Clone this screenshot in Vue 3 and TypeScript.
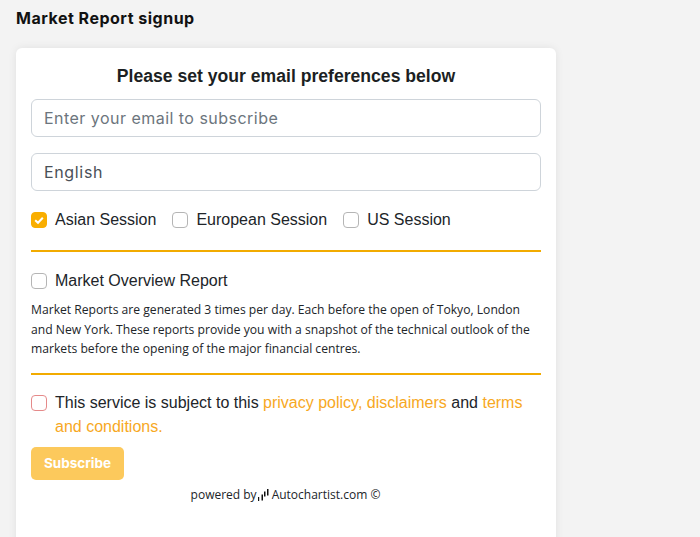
<script setup lang="ts">
import { ref } from 'vue'

const language = ref('English')
const sessions = ref([
  { label: 'Asian Session', checked: true },
  { label: 'European Session', checked: false },
  { label: 'US Session', checked: false },
])
const overview = ref(false)
const terms = ref(false)
</script>

<template>
  <div class="page">
    <h1 class="page-title">Market Report signup</h1>
    <section class="card">
      <h2 class="card-title">Please set your email preferences below</h2>
      <div class="field"><span class="placeholder">Enter your email to subscribe</span></div>
      <div class="field field-lang"><span class="value">{{ language }}</span></div>

      <div class="sessions">
        <label v-for="s in sessions" :key="s.label" class="check">
          <span class="box" :class="{ on: s.checked }">
            <svg v-if="s.checked" viewBox="0 0 16 16" width="16" height="16">
              <path d="M4.2 8.3 7 10.8 11.8 5.8" fill="none" stroke="#fff" stroke-width="2" />
            </svg>
          </span>
          <span>{{ s.label }}</span>
        </label>
      </div>

      <hr class="rule rule-a" />

      <label class="check overview">
        <span class="box" :class="{ on: overview }"></span>
        <span>Market Overview Report</span>
      </label>
      <p class="desc">
        Market Reports are generated 3 times per day. Each before the open of Tokyo, London and New York. These reports provide you with a snapshot of the technical outlook of the markets before the opening of the major financial centres.
      </p>

      <hr class="rule rule-b" />

      <div class="terms">
        <span class="box invalid" :class="{ on: terms }"></span>
        <p>This service is subject to this <a>privacy policy,</a> <a>disclaimers</a> and <a>terms and conditions.</a></p>
      </div>

      <button class="subscribe" type="button">Subscribe</button>

      <div class="powered">
        <span>powered by</span>
        <svg class="logo" viewBox="0 0 11 12" width="11" height="12">
          <rect x="0" y="8" width="1.2" height="4" fill="#111" />
          <rect x="3.5" y="5.5" width="1.5" height="6" fill="#111" />
          <rect x="6" y="2.5" width="1.5" height="5" fill="#111" />
          <rect x="9" y="0" width="1.5" height="6.5" fill="#111" />
        </svg>
        <span>Autochartist.com ©</span>
      </div>
    </section>
  </div>
</template>

<style>
html, body {
  margin: 0;
  height: 100%;
  overflow: hidden;
  background: #f3f3f3;
}
</style>

<style scoped>
.page {
  height: 537px;
  padding: 0 16px;
  box-sizing: border-box;
  overflow: hidden;
  font-family: "Liberation Sans", Arial, sans-serif;
  color: #212529;
}
.page-title {
  margin: 0;
  padding-top: 9px;
  height: 48px;
  box-sizing: border-box;
  font-family: "Inter", sans-serif;
  font-size: 16px;
  line-height: 19px;
  font-weight: 700;
  letter-spacing: 0.5px;
  color: #111;
}
.card {
  width: 540px;
  height: 520px;
  box-sizing: border-box;
  padding: 15px;
  background: #fff;
  border-radius: 6px;
  box-shadow: 0 0 8px rgba(0, 0, 0, 0.08);
}
.card-title {
  margin: 1px 0 11px;
  text-align: center;
  font-size: 17.6px;
  line-height: 24px;
  font-weight: 700;
  color: #1c1f23;
  height: 24px;
}
.field {
  height: 38px;
  box-sizing: border-box;
  border: 1px solid #ced4da;
  border-radius: 6px;
  padding: 0 12px;
  display: flex;
  align-items: center;
  font-family: "Inter", sans-serif;
  font-size: 16px;
  letter-spacing: 0.47px;
  background: #fff;
}
.field-lang { margin-top: 16px; }
.placeholder { color: #6c757d; }
.value { color: #495057; letter-spacing: 0.65px; }
.sessions {
  display: flex;
  gap: 16px;
  margin-top: 19px;
}
.check {
  display: flex;
  align-items: center;
  gap: 8px;
  font-size: 16px;
  line-height: 20px;
  color: #212529;
}
.box {
  width: 16px;
  height: 16px;
  box-sizing: border-box;
  border: 1px solid #b5b5b5;
  border-radius: 4px;
  background: #fff;
  flex: none;
  display: block;
}
.box.on {
  background: #f9ae00;
  border-color: #f9ae00;
}
.box.on svg {
  display: block;
  margin: -1px;
}
.box.invalid {
  border-color: #e58a8a;
  margin-top: 4px;
}
.rule {
  border: 0;
  height: 2px;
  background: #f2ab00;
  margin: 0;
}
.rule-a { margin-top: 20px; }
.overview { margin-top: 19px; }
.desc {
  margin: 9px 0 0;
  font-family: "Open Sans", sans-serif;
  font-size: 12.15px;
  line-height: 19.5px;
  color: #212529;
}
.rule-b { margin-top: 14px; }
.terms {
  display: flex;
  gap: 8px;
  margin-top: 16px;
  font-size: 16px;
  line-height: 24px;
}
.terms p {
  margin: 0;
  color: #212529;
}
.terms a {
  color: #f7a823;
}
.subscribe {
  display: block;
  margin-top: 8px;
  width: 93px;
  height: 33px;
  border: 0;
  border-radius: 5px;
  background: #fcc95c;
  color: #fff;
  font-family: "Inter", sans-serif;
  font-size: 13.5px;
  font-weight: 700;
  padding: 0;
}
.powered {
  display: flex;
  justify-content: center;
  align-items: center;
  margin-top: 6px;
  padding-right: 1px;
  font-family: "Open Sans", sans-serif;
  font-size: 12px;
  line-height: 18px;
  color: #212529;
}
.logo {
  margin: 0 3px 0 1px;
}
</style>
